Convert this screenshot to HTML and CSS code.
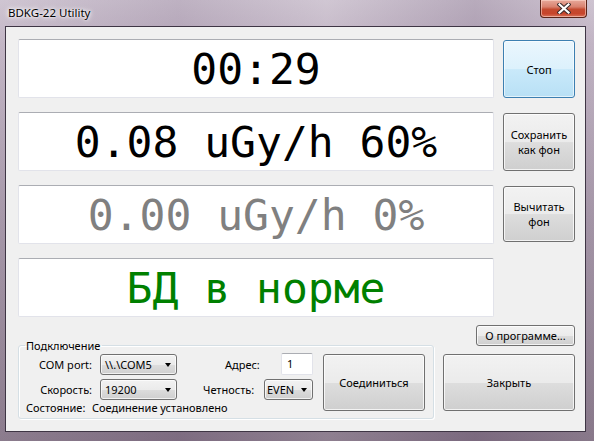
FILE: index.html
```html
<!DOCTYPE html>
<html>
<head>
<meta charset="utf-8">
<link rel="stylesheet" href="styles.css">
</head>
<body>
<div class="window">
  <div class="titlebar">
    <span class="title">BDKG-22 Utility</span>
    <button class="close" aria-label="Close">
      <svg width="14" height="11" viewBox="0 0 14 11">
        <path d="M2.5 1.5 L11.5 9.5 M11.5 1.5 L2.5 9.5" stroke="#3a2a2a" stroke-width="4.2" stroke-linecap="square"/>
        <path d="M2.5 1.5 L11.5 9.5 M11.5 1.5 L2.5 9.5" stroke="#ffffff" stroke-width="2.2" stroke-linecap="square"/>
      </svg>
    </button>
  </div>
  <div class="client">
    <div class="rows">
      <div class="row">
        <div class="display">00:29</div>
        <button class="btn btn-focus">Стоп</button>
      </div>
      <div class="row">
        <div class="display">0.08 uGy/h 60%</div>
        <button class="btn">Сохранить<br>как фон</button>
      </div>
      <div class="row">
        <div class="display gray">0.00 uGy/h 0%</div>
        <button class="btn">Вычитать<br>фон</button>
      </div>
      <div class="row">
        <div class="display green">БД в норме</div>
      </div>
    </div>
    <div class="bottom">
      <fieldset class="group">
        <legend>Подключение</legend>
        <div class="group-body">
          <div class="fields">
            <div class="grid">
              <span class="lbl">COM port:</span>
              <div class="combo">\\.\COM5<span class="arrow"></span></div>
              <div class="pair">
                <span class="lbl2 addr">Адрес:</span>
                <div class="textbox">1</div>
              </div>
              <span class="lbl">Скорость:</span>
              <div class="combo">19200<span class="arrow"></span></div>
              <div class="pair">
                <span class="lbl2 parity">Четность:</span>
                <div class="combo combo-small">EVEN<span class="arrow"></span></div>
              </div>
            </div>
            <div class="status">
              <span class="status-lbl">Состояние:</span>
              <span>Соединение установлено</span>
            </div>
          </div>
          <button class="btn btn-connect">Соединиться</button>
        </div>
      </fieldset>
      <div class="side">
        <button class="btn btn-about">О программе...</button>
        <button class="btn btn-close">Закрыть</button>
      </div>
    </div>
  </div>
</div>
</body>
</html>
```
FILE: styles.css
```css
* { box-sizing: border-box; }
html, body { margin: 0; padding: 0; }
body {
  width: 594px;
  height: 441px;
  overflow: hidden;
  font-family: "Noto Sans", "Open Sans", sans-serif;
  font-size: 11px;
  color: #000;
}
.window {
  width: 594px;
  height: 441px;
  display: flex;
  flex-direction: column;
  background:
    linear-gradient(90deg, rgba(255,255,255,0.10) 0%, rgba(120,100,130,0.15) 30%, rgba(255,255,255,0.12) 55%, rgba(110,90,120,0.2) 80%, rgba(255,255,255,0.08) 100%),
    linear-gradient(180deg, #cabfcd 0%, #bcaebf 10%, #9c8c9f 50%, #7e6d80 100%);
}
.titlebar {
  height: 26px;
  display: flex;
  align-items: flex-start;
  flex-shrink: 0;
}
.title {
  margin: 5px 0 0 8px;
  font-size: 11.5px;
  line-height: 16px;
  color: #000;
  text-shadow: 0 0 6px #fff, 0 0 4px #fff, 0 0 2px rgba(255,255,255,0.8);
}
.close {
  margin: 0 7px 0 auto;
  width: 47px;
  height: 18px;
  padding: 0;
  border: 1px solid #5a2418;
  border-top: none;
  border-radius: 0 0 4px 4px;
  background: linear-gradient(180deg, #e7a99a 0%, #d9826f 40%, #c44a2f 55%, #c7452b 80%, #d8745c 100%);
  box-shadow: inset 0 0 0 1px rgba(255,220,210,0.55);
  display: flex;
  align-items: center;
  justify-content: center;
}
.close svg { display: block; }
.client {
  margin: 0 8px 0 5px;
  height: 406px;
  border: 1px solid #3e3544;
  background: #f0f0f0;
  padding: 12px 10px 0 12px;
  display: flex;
  flex-direction: column;
}
.rows {
  display: flex;
  flex-direction: column;
  gap: 14px;
}
.row {
  display: flex;
  gap: 9px;
  height: 59px;
}
.display {
  width: 476px;
  height: 59px;
  background: #fff;
  border: 1px solid #e2e3ea;
  border-top-color: #abadb3;
  border-radius: 2px;
  display: flex;
  align-items: center;
  justify-content: center;
  font-family: "DejaVu Sans Mono", "Liberation Mono", monospace;
  font-size: 43px;
  line-height: 1;
  color: #000;
  white-space: pre;
  padding-top: 1px;
}
.display.gray { color: #808080; }
.display.green { color: #008000; }
.btn {
  font-family: "Noto Sans", "Open Sans", sans-serif;
  font-size: 11px;
  line-height: 15px;
  color: #000;
  border: 1px solid #707070;
  border-radius: 3px;
  background: linear-gradient(180deg, #f2f2f2 0%, #ebebeb 50%, #dddddd 51%, #cfcfcf 100%);
  box-shadow: inset 0 0 0 1px rgba(255,255,255,0.75);
  padding: 0;
  text-align: center;
}
.row .btn {
  width: 72px;
  height: 58px;
  margin-top: 1px;
}
.row:nth-child(3) .btn { height: 56px; }
.btn-focus {
  border-color: #3c7fb1;
  background: linear-gradient(180deg, #eaf6fd 0%, #dcf1fc 50%, #c9e9fa 51%, #b8e0f5 100%);
  box-shadow: inset 0 0 0 1px rgba(255,255,255,0.6);
}
.bottom {
  margin-top: 8px;
  display: flex;
  gap: 9px;
}
.group {
  margin: 14px 0 0 0;
  width: 416px;
  padding: 0 8px 3px 0;
  border: 1px solid #d5dfe5;
  border-radius: 3px;
  box-shadow: inset 1px 1px 0 #fff, 1px 1px 0 #fff;
  min-width: 0;
}
.group legend {
  margin-left: 6px;
  padding: 0 2px 0 1px;
  font-size: 11px;
  line-height: 13px;
}
.group-body {
  display: flex;
  gap: 10px;
  padding-top: 1px;
}
.fields {
  display: flex;
  flex-direction: column;
}
.grid {
  display: grid;
  grid-template-columns: 73px 77px 128px;
  column-gap: 8px;
  row-gap: 4px;
  align-items: center;
}
.lbl {
  text-align: right;
  white-space: nowrap;
}
.pair {
  display: flex;
  align-items: center;
}
.lbl2 { white-space: nowrap; }
.addr { margin-left: 40px; }
.parity { margin-left: 18px; }
.pair > .textbox, .pair > .combo { margin-left: auto; }
.combo {
  position: relative;
  width: 77px;
  height: 21px;
  border: 1px solid #707070;
  border-radius: 3px;
  background: linear-gradient(180deg, #f2f2f2 0%, #ebebeb 50%, #dddddd 51%, #cfcfcf 100%);
  box-shadow: inset 0 0 0 1px rgba(255,255,255,0.7);
  padding: 0 0 0 4px;
  line-height: 19px;
  white-space: nowrap;
}
.combo-small { width: 49px; padding-left: 2px; }
.arrow {
  position: absolute;
  right: 5px;
  top: 8px;
  width: 0;
  height: 0;
  border-left: 3.5px solid transparent;
  border-right: 3.5px solid transparent;
  border-top: 4px solid #000;
}
.textbox {
  width: 32px;
  height: 22px;
  background: #fff;
  border: 1px solid #e2e3ea;
  border-top-color: #abadb3;
  border-radius: 2px;
  padding-left: 5px;
  line-height: 20px;
}
.status {
  display: flex;
  padding-left: 7px;
  margin-top: 1px;
  line-height: 14px;
  white-space: nowrap;
}
.status-lbl { width: 66px; }
.btn-connect {
  width: 102px;
  height: 57px;
  margin-top: 1px;
}
.side {
  display: flex;
  flex-direction: column;
  width: 132px;
}
.btn-about {
  align-self: flex-end;
  width: 99px;
  height: 21px;
  line-height: 17px;
}
.btn-close {
  margin-top: 8px;
  width: 132px;
  height: 57px;
}
```
